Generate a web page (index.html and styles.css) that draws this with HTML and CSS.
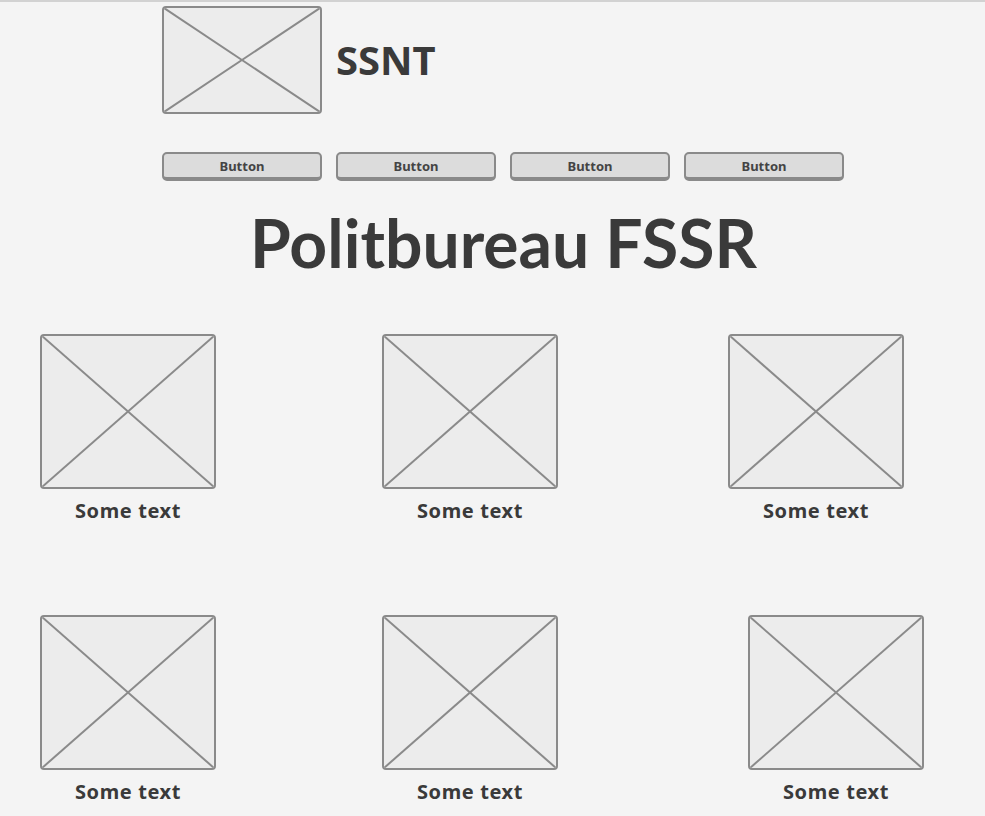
FILE: index.html
```html
<!DOCTYPE html>
<html>
<head>
<meta charset="utf-8">
<link rel="stylesheet" href="styles.css">
</head>
<body>
<div class="page">
  <header class="brand">
    <div class="ph logo">
      <svg viewBox="0 0 100 100" preserveAspectRatio="none"><line x1="0" y1="0" x2="100" y2="100"/><line x1="100" y1="0" x2="0" y2="100"/></svg>
    </div>
    <span class="name">SSNT</span>
  </header>
  <nav class="buttons">
    <button class="btn">Button</button>
    <button class="btn">Button</button>
    <button class="btn">Button</button>
    <button class="btn">Button</button>
  </nav>
  <h1 class="title">Politbureau FSSR</h1>
  <section class="row row-a">
    <div class="card c1"><div class="ph pic"><svg viewBox="0 0 100 100" preserveAspectRatio="none"><line x1="0" y1="0" x2="100" y2="100"/><line x1="100" y1="0" x2="0" y2="100"/></svg></div><p class="cap">Some text</p></div>
    <div class="card c2"><div class="ph pic"><svg viewBox="0 0 100 100" preserveAspectRatio="none"><line x1="0" y1="0" x2="100" y2="100"/><line x1="100" y1="0" x2="0" y2="100"/></svg></div><p class="cap">Some text</p></div>
    <div class="card c3"><div class="ph pic"><svg viewBox="0 0 100 100" preserveAspectRatio="none"><line x1="0" y1="0" x2="100" y2="100"/><line x1="100" y1="0" x2="0" y2="100"/></svg></div><p class="cap">Some text</p></div>
  </section>
  <section class="row row-b">
    <div class="card c1"><div class="ph pic"><svg viewBox="0 0 100 100" preserveAspectRatio="none"><line x1="0" y1="0" x2="100" y2="100"/><line x1="100" y1="0" x2="0" y2="100"/></svg></div><p class="cap">Some text</p></div>
    <div class="card c2"><div class="ph pic"><svg viewBox="0 0 100 100" preserveAspectRatio="none"><line x1="0" y1="0" x2="100" y2="100"/><line x1="100" y1="0" x2="0" y2="100"/></svg></div><p class="cap">Some text</p></div>
    <div class="card c3b"><div class="ph pic"><svg viewBox="0 0 100 100" preserveAspectRatio="none"><line x1="0" y1="0" x2="100" y2="100"/><line x1="100" y1="0" x2="0" y2="100"/></svg></div><p class="cap">Some text</p></div>
  </section>
</div>
</body>
</html>
```
FILE: styles.css
```css
html, body {
  margin: 0;
  padding: 0;
  background: #f4f4f4;
}
body {
  font-family: "Noto Sans", "Open Sans", sans-serif;
  color: #3a3a3a;
  border-top: 2px solid #d2d2d2;
  height: 814px;
  overflow: hidden;
}
.page {
  display: flex;
  flex-direction: column;
}
.ph {
  box-sizing: border-box;
  border: 2px solid #8a8a8a;
  border-radius: 4px;
  background: #ececec;
  overflow: hidden;
}
.ph svg {
  display: block;
  width: 100%;
  height: 100%;
}
.ph line {
  stroke: #8a8a8a;
  stroke-width: 2;
  vector-effect: non-scaling-stroke;
}
.brand {
  display: flex;
  align-items: center;
  gap: 14px;
  margin: 4px 0 0 162px;
}
.logo {
  width: 160px;
  height: 108px;
}
.name {
  font-size: 40px;
  font-weight: 700;
  line-height: 1;
}
.buttons {
  display: flex;
  gap: 14px;
  margin: 38px 0 0 162px;
}
.btn {
  box-sizing: border-box;
  width: 160px;
  height: 29px;
  padding: 0;
  background: #dcdcdc;
  border: 2px solid #8a8a8a;
  border-bottom-width: 4px;
  border-radius: 5px;
  font-family: inherit;
  font-size: 13px;
  font-weight: 700;
  color: #444;
}
.title {
  margin: 30px 0 0 0;
  padding-left: 22px;
  text-align: center;
  font-family: Lato, "Noto Sans", sans-serif;
  font-size: 66px;
  font-weight: 700;
  line-height: 64px;
  letter-spacing: 0;
}
.row {
  display: flex;
}
.row-a { margin-top: 59px; }
.row-b { margin-top: 91px; }
.card {
  display: flex;
  flex-direction: column;
  align-items: center;
  width: 176px;
}
.c1 { margin-left: 40px; }
.c2 { margin-left: 166px; }
.c3 { margin-left: 170px; }
.c3b { margin-left: 190px; }
.pic {
  width: 176px;
  height: 155px;
}
.cap {
  margin: 9px 0 0 0;
  font-size: 20px;
  font-weight: 700;
  line-height: 26px;
  letter-spacing: 0.6px;
  white-space: nowrap;
}
```
